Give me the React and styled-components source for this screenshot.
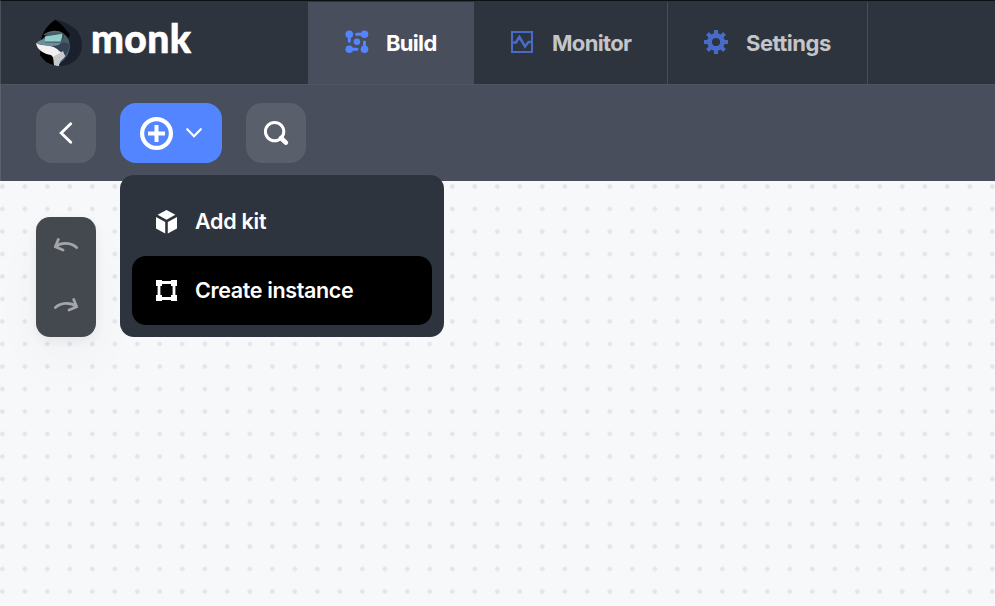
import React from "react";
import styled, { createGlobalStyle } from "styled-components";

const GlobalStyle = createGlobalStyle`
  * { box-sizing: border-box; }
  body { margin: 0; overflow: hidden; font-family: Inter, "Liberation Sans", sans-serif; }
  button { border: 0; padding: 0; font: inherit; color: inherit; }
  svg { display: block; flex: none; }
`;

const Page = styled.div`
  width: 995px;
  height: 606px;
  display: flex;
  flex-direction: column;
  background: #f7f8fa;
`;

const Header = styled.header`
  height: 84px;
  flex: none;
  display: flex;
  background: #2e343e;
  border-top: 1px solid #0e1013;
  border-left: 1px solid #4b515b;
`;

const Brand = styled.div`
  width: 307px;
  padding: 17px 0 0 34px;
  display: flex;
  align-items: flex-start;
`;

const BrandName = styled.span`
  margin: -4px 0 0 8px;
  color: #fff;
  font: 900 39px/48px Lato, sans-serif;
  letter-spacing: 0.4px;
  -webkit-text-stroke: 0.6px #fff;
`;

const Tab = styled.button`
  width: ${(p) => p.$width}px;
  margin-top: 1px;
  padding: 0 0 2px ${(p) => p.$inset}px;
  display: flex;
  align-items: center;
  gap: ${(p) => p.$gap}px;
  background: ${(p) => (p.$active ? "#484e5b" : "transparent")};
  border-right: ${(p) => (p.$active ? "0" : "1px solid #484e59")};
  color: ${(p) => (p.$active ? "#fff" : "#c4c5c7")};
  font-size: 22px;
  font-weight: 700;
  letter-spacing: ${(p) => p.$spacing}px;
  white-space: nowrap;
`;

const TabLabel = styled.span`
  padding-top: 1px;
`;

const Toolbar = styled.div`
  height: 97px;
  flex: none;
  display: flex;
  gap: 24px;
  padding: 18px 35px;
  background: #484e5b;
  border-top: 1px solid #505563;
  border-left: 1px solid #5c626d;
`;

const ToolButton = styled.button`
  width: ${(p) => (p.$primary ? 102 : 60)}px;
  height: 60px;
  display: flex;
  align-items: center;
  justify-content: center;
  gap: 12px;
  border-radius: 16px;
  background: ${(p) => (p.$primary ? "#5285ff" : "#5a606b")};
`;

const MenuAnchor = styled.div`
  position: relative;
`;

const Menu = styled.div`
  position: absolute;
  z-index: 2;
  left: 0;
  top: 72px;
  width: 324px;
  padding: 12px;
  border-radius: 14px;
  background: #2e343e;
`;

const MenuItem = styled.div`
  height: 69px;
  padding-left: 23px;
  display: flex;
  align-items: center;
  gap: 17px;
  border-radius: 14px;
  background: ${(p) => (p.$active ? "#000" : "transparent")};
  color: #fff;
  font-size: 21.5px;
  font-weight: 600;
  letter-spacing: ${(p) => p.$spacing}px;
`;

const MenuLabel = styled.span`
  padding-bottom: 2px;
`;

const Canvas = styled.main`
  flex: 1;
  padding: 36px;
  background-image: radial-gradient(circle, #e2e5ea 1.9px, transparent 2.6px);
  background-size: 22.5px 22.5px;
  background-position: -8.95px -5.75px;
`;

const History = styled.div`
  width: 60px;
  height: 120px;
  display: flex;
  flex-direction: column;
  align-items: center;
  border-radius: 14px;
  background: #44484f;
  box-shadow: 0 24px 54px rgba(0, 0, 0, 0.03), 0 4px 12px rgba(0, 0, 0, 0.06);
`;

const HistoryButton = styled.button`
  width: 60px;
  height: 60px;
  padding-bottom: 4px;
  display: flex;
  align-items: center;
  justify-content: center;
  background: transparent;
`;

const Logo = () => (
  <svg width="48" height="48" viewBox="0 0 48 48">
    <path d="M20 1.5 C31 4 47 10 47 27 C47 39 38 48 25 48 C12 48 4 39 5 27 C6 16 13 7 20 1.5Z" fill="#1b202d" />
    <path d="M20 2 C14 6 6 14 5.5 26 L5 37 C9 43 13 46 20 47 L31 24 L35 17 C31 11 27 6 20 2Z" fill="#000" />
    <path d="M1.5 26 C3 22 8 22 11 17 C15 12 25 12 29 16 C35 20 37 30 32 38 C29 42 27 44 24 46 L20 38 C12 36 3 32 1.5 26Z" fill="#485b6a" />
    <path d="M4 24 C9 22 15 28 24 26 C29 24 33 24 34 27 C34 34 30 38 25 40 C17 36 8 30 4 24Z" fill="#354254" />
    <path d="M1.5 25 C4 22 9 22 10 20 C14 25 22 25 27 23 L24 27 C17 29 8 28 1.5 25Z" fill="#6d8f9b" />
    <path d="M1 25 C8 29 16 26 22 31 C25 34 28 35 30 38 C28 42 24 42 24 48 L19 47 C20 42 19 40 16 37 C9 36 2 32 1 25Z" fill="#f2eff0" />
    <path d="M18 39 L28 33 L30 38 C27 42 24 43 24 48 L19 47Z" fill="#c7c8ca" />
    <path d="M9 17 C14 13 23 12 28 16" fill="none" stroke="#5c6671" strokeWidth="1.5" />
    <path d="M10 18.5 L27.5 15.7 L26 24 L10 24Z" fill="#91cfca" />
    <path d="M27.5 15.7 L28.5 18.5 L26 24 L10 24" fill="none" stroke="#263440" strokeWidth="0.7" />
  </svg>
);

const BuildIcon = () => (
  <svg width="24" height="24" viewBox="0 0 24 24" fill="#5285ff" stroke="#5285ff" strokeLinecap="round">
    <g stroke="none">
      <circle cx="4.3" cy="4.2" r="3.8" /><circle cx="19.5" cy="4.2" r="3.8" />
      <circle cx="4.3" cy="19.2" r="3.8" /><circle cx="19.5" cy="19.2" r="3.8" />
      <circle cx="11.9" cy="11.7" r="3.3" />
    </g>
    <path d="M4.3 5V11.2M18 4.2H11.6M19.5 18V12M5 19.2H12" strokeWidth="3" />
  </svg>
);

const MonitorIcon = () => (
  <svg width="22" height="22" viewBox="0 0 22 22" fill="none" stroke="#476bc7" strokeWidth="2">
    <rect x="1" y="1" width="20" height="20" />
    <path d="M1 11.5H5L8.4 6L14 15.5L17.5 11H21" strokeWidth="2.5" />
  </svg>
);

const SettingsIcon = () => (
  <svg width="24" height="24" viewBox="0 0 24 24" fill="none" stroke="#476bc7">
    <circle cx="12" cy="12" r="6.5" strokeWidth="4.8" />
    <path d="M12 0V4M12 20V24M0 12H4M20 12H24M3.5 3.5L6.5 6.5M17.5 17.5L20.5 20.5M3.5 20.5L6.5 17.5M17.5 6.5L20.5 3.5" strokeWidth="4.1" />
  </svg>
);

const BackIcon = () => (
  <svg width="14" height="22" viewBox="0 0 14 22" fill="none" stroke="#fff" strokeWidth="2.8" strokeLinecap="round">
    <path d="M11.7 1.7L2.2 11L11.7 20.3" />
  </svg>
);

const PlusIcon = () => (
  <svg width="34" height="34" viewBox="0 0 34 34" fill="none" stroke="#fff">
    <circle cx="16.5" cy="17.5" r="14.4" strokeWidth="4.2" />
    <path d="M16.5 9V26M8 17.5H25" strokeWidth="4" />
  </svg>
);

const DownIcon = () => (
  <svg width="17" height="10" viewBox="0 0 17 10" fill="none" stroke="#fff" strokeWidth="2.1" strokeLinecap="round">
    <path d="M1.2 1.2L8 8.3L14.8 1.2" />
  </svg>
);

const SearchIcon = () => (
  <svg width="26" height="26" viewBox="0 0 26 26" fill="none" stroke="#fff">
    <circle cx="11.6" cy="11.6" r="9.2" strokeWidth="3" />
    <path d="M18 18L22.8 22.6" strokeWidth="4.6" strokeLinecap="round" />
  </svg>
);

const KitIcon = () => (
  <svg width="23" height="24" viewBox="0 0 23 24" fill="#fff">
    <path d="M11.5 0L20.4 4.8L11.5 9.8L2.6 4.8ZM1 7L10.2 12V23.6L1 18.6ZM22 7L12.8 12V23.6L22 18.6Z" />
  </svg>
);

const InstanceIcon = () => (
  <svg width="23" height="22" viewBox="0 0 23 22" fill="#fff">
    <path d="M1 0H7V6H1ZM16 0H22V6H16ZM1 15H7V21H1ZM16 15H22V21H16Z" />
    <path d="M7 2.5H16M7 18.5H16M4 6V15M19 6V15" fill="none" stroke="#fff" strokeWidth="2.8" />
  </svg>
);

const UndoIcon = () => (
  <svg width="26" height="14" viewBox="0 0 26 14" fill="none" stroke="#a4a5a8" strokeWidth="2.8" strokeLinecap="round" strokeLinejoin="round">
    <path d="M23.6 9.5C18 4.7 9 3.8 2.4 8.6M5.3 1.5L2.3 8.8L10 12" />
  </svg>
);

const RedoIcon = () => (
  <svg width="26" height="14" viewBox="0 0 26 14" fill="none" stroke="#a4a5a8" strokeWidth="2.8" strokeLinecap="round" strokeLinejoin="round">
    <path d="M2.4 9.5C8 4.7 17 3.8 23.6 8.6M20.7 1.5L23.7 8.8L16 12" />
  </svg>
);

export default function App() {
  return (
    <Page>
      <GlobalStyle />
      <Header>
        <Brand>
          <Logo />
          <BrandName>monk</BrandName>
        </Brand>
        <Tab $active $width={166} $inset={37} $gap={17} $spacing={-0.7}>
          <BuildIcon /><TabLabel>Build</TabLabel>
        </Tab>
        <Tab $width={194} $inset={37} $gap={19} $spacing={-0.65}>
          <MonitorIcon /><TabLabel>Monitor</TabLabel>
        </Tab>
        <Tab $width={200} $inset={36} $gap={18} $spacing={-0.5}>
          <SettingsIcon /><TabLabel>Settings</TabLabel>
        </Tab>
      </Header>
      <Toolbar>
        <ToolButton aria-label="Back"><BackIcon /></ToolButton>
        <MenuAnchor>
          <ToolButton $primary aria-label="Add"><PlusIcon /><DownIcon /></ToolButton>
          <Menu>
            <MenuItem $spacing={-0.25}><KitIcon /><MenuLabel>Add kit</MenuLabel></MenuItem>
            <MenuItem $active $spacing={-0.36}><InstanceIcon /><MenuLabel>Create instance</MenuLabel></MenuItem>
          </Menu>
        </MenuAnchor>
        <ToolButton aria-label="Search"><SearchIcon /></ToolButton>
      </Toolbar>
      <Canvas>
        <History>
          <HistoryButton aria-label="Undo"><UndoIcon /></HistoryButton>
          <HistoryButton aria-label="Redo"><RedoIcon /></HistoryButton>
        </History>
      </Canvas>
    </Page>
  );
}
